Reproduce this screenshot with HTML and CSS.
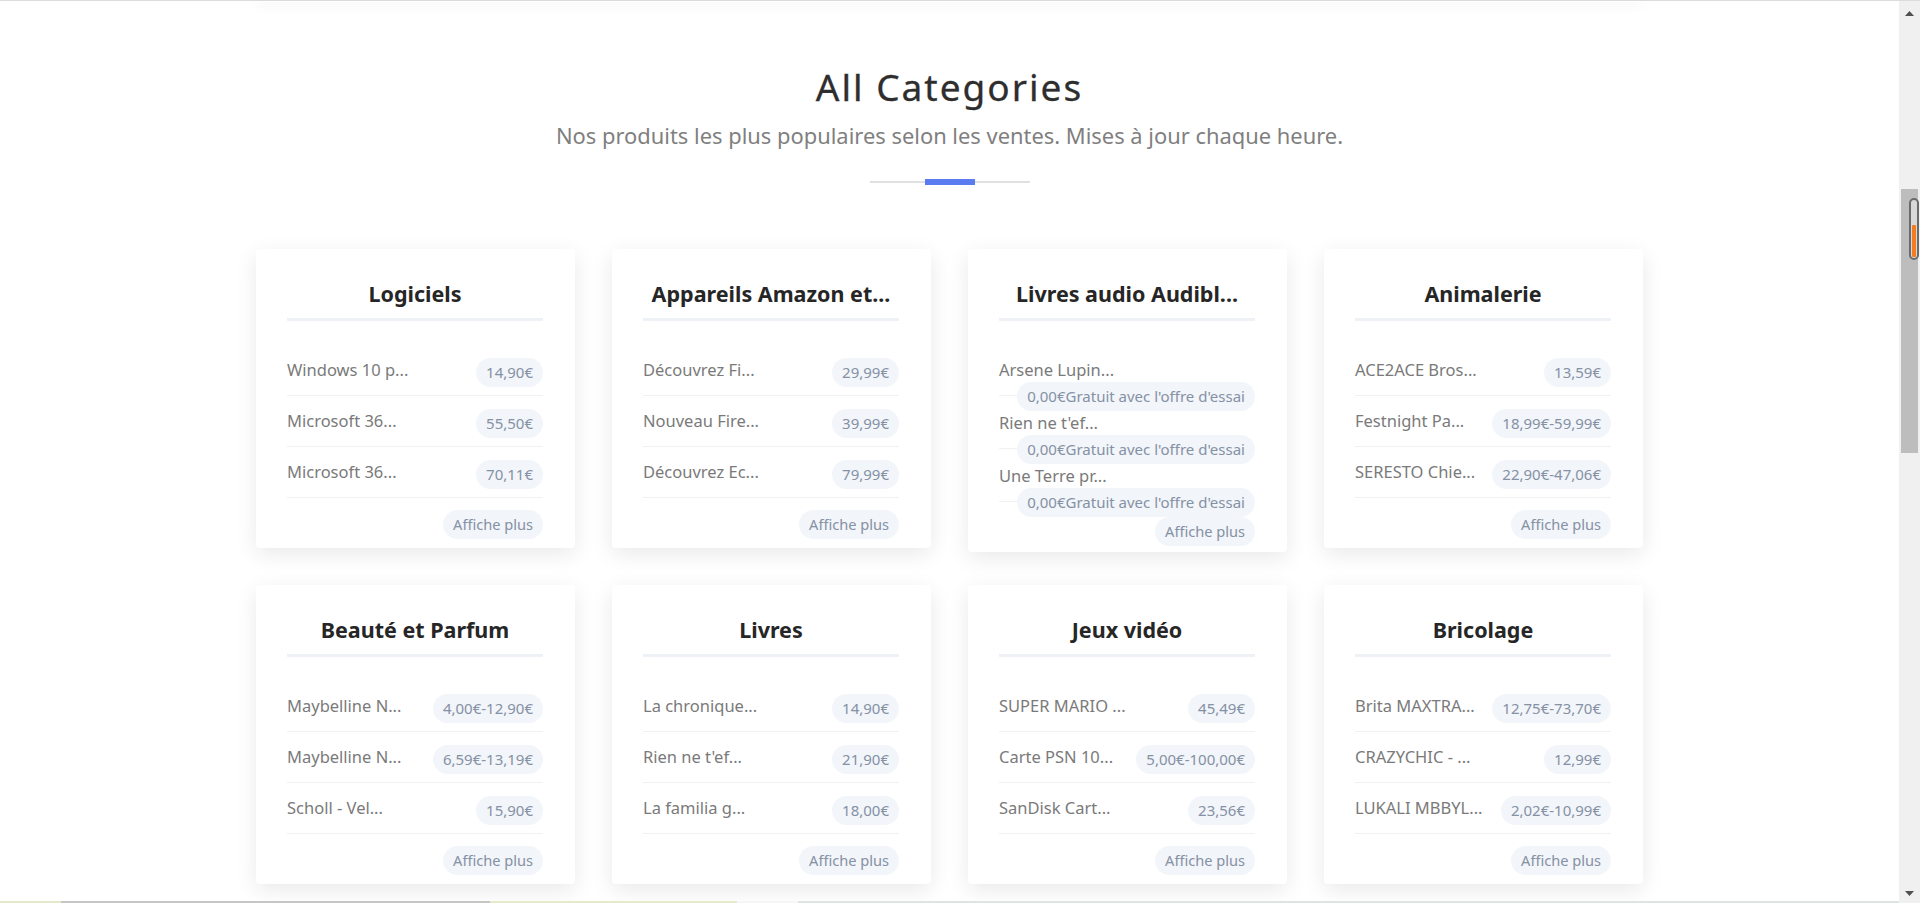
FILE: index.html
```html
<!DOCTYPE html>
<html lang="fr">
<head>
<meta charset="utf-8">
<title>All Categories</title>
<link rel="stylesheet" href="styles.css">
</head>
<body>
<div class="topline"></div>
<div class="window">
  <div class="page">
    <div class="header-edge"></div>
    <section class="categories">
      <h1 class="sec-title">All Categories</h1>
      <p class="sec-sub">Nos produits les plus populaires selon les ventes. Mises à jour chaque heure.</p>
      <div class="divider"><span class="divider-bar"></span></div>

      <div class="grid">
        <div class="card">
          <h3 class="card-title">Logiciels</h3>
          <ul class="items">
            <li class="item"><span class="name">Windows 10 p...</span><span class="price">14,90€</span></li>
            <li class="item"><span class="name">Microsoft 36...</span><span class="price">55,50€</span></li>
            <li class="item"><span class="name">Microsoft 36...</span><span class="price">70,11€</span></li>
          </ul>
          <div class="card-foot"><a class="more">Affiche plus</a></div>
        </div>

        <div class="card">
          <h3 class="card-title">Appareils Amazon et...</h3>
          <ul class="items">
            <li class="item"><span class="name">Découvrez Fi...</span><span class="price">29,99€</span></li>
            <li class="item"><span class="name">Nouveau Fire...</span><span class="price">39,99€</span></li>
            <li class="item"><span class="name">Découvrez Ec...</span><span class="price">79,99€</span></li>
          </ul>
          <div class="card-foot"><a class="more">Affiche plus</a></div>
        </div>

        <div class="card">
          <h3 class="card-title">Livres audio Audibl...</h3>
          <ul class="items">
            <li class="item"><span class="name">Arsene Lupin...</span><span class="price">0,00€Gratuit avec l'offre d'essai</span></li>
            <li class="item"><span class="name">Rien ne t'ef...</span><span class="price">0,00€Gratuit avec l'offre d'essai</span></li>
            <li class="item"><span class="name">Une Terre pr...</span><span class="price">0,00€Gratuit avec l'offre d'essai</span></li>
          </ul>
          <div class="card-foot"><a class="more">Affiche plus</a></div>
        </div>

        <div class="card">
          <h3 class="card-title">Animalerie</h3>
          <ul class="items">
            <li class="item"><span class="name">ACE2ACE Bros...</span><span class="price">13,59€</span></li>
            <li class="item"><span class="name">Festnight Pa...</span><span class="price">18,99€-59,99€</span></li>
            <li class="item"><span class="name">SERESTO Chie...</span><span class="price">22,90€-47,06€</span></li>
          </ul>
          <div class="card-foot"><a class="more">Affiche plus</a></div>
        </div>

        <div class="card">
          <h3 class="card-title">Beauté et Parfum</h3>
          <ul class="items">
            <li class="item"><span class="name">Maybelline N...</span><span class="price">4,00€-12,90€</span></li>
            <li class="item"><span class="name">Maybelline N...</span><span class="price">6,59€-13,19€</span></li>
            <li class="item"><span class="name">Scholl - Vel...</span><span class="price">15,90€</span></li>
          </ul>
          <div class="card-foot"><a class="more">Affiche plus</a></div>
        </div>

        <div class="card">
          <h3 class="card-title">Livres</h3>
          <ul class="items">
            <li class="item"><span class="name">La chronique...</span><span class="price">14,90€</span></li>
            <li class="item"><span class="name">Rien ne t'ef...</span><span class="price">21,90€</span></li>
            <li class="item"><span class="name">La familia g...</span><span class="price">18,00€</span></li>
          </ul>
          <div class="card-foot"><a class="more">Affiche plus</a></div>
        </div>

        <div class="card">
          <h3 class="card-title">Jeux vidéo</h3>
          <ul class="items">
            <li class="item"><span class="name">SUPER MARIO ...</span><span class="price">45,49€</span></li>
            <li class="item"><span class="name">Carte PSN 10...</span><span class="price">5,00€-100,00€</span></li>
            <li class="item"><span class="name">SanDisk Cart...</span><span class="price">23,56€</span></li>
          </ul>
          <div class="card-foot"><a class="more">Affiche plus</a></div>
        </div>

        <div class="card">
          <h3 class="card-title">Bricolage</h3>
          <ul class="items">
            <li class="item"><span class="name">Brita MAXTRA...</span><span class="price">12,75€-73,70€</span></li>
            <li class="item"><span class="name">CRAZYCHIC - ...</span><span class="price">12,99€</span></li>
            <li class="item"><span class="name">LUKALI MBBYL...</span><span class="price">2,02€-10,99€</span></li>
          </ul>
          <div class="card-foot"><a class="more">Affiche plus</a></div>
        </div>
      </div>
    </section>
    <div class="next-strip">
      <span class="seg seg-a"></span><span class="seg seg-b"></span><span class="seg seg-c"></span><span class="seg seg-d"></span><span class="seg seg-e"></span>
    </div>
  </div>

  <aside class="scrollbar">
    <div class="sb-btn sb-up"><svg width="9" height="5" viewBox="0 0 9 5"><path d="M0 5 L4.5 0 L9 5 Z" fill="#505050"/></svg></div>
    <div class="sb-thumb">
      <div class="sb-widget"><span class="sb-widget-bar"></span></div>
    </div>
    <div class="sb-space"></div>
    <div class="sb-btn sb-down"><svg width="9" height="5" viewBox="0 0 9 5"><path d="M0 0 L9 0 L4.5 5 Z" fill="#505050"/></svg></div>
  </aside>
</div>
</body>
</html>
```
FILE: styles.css
```css
* { box-sizing: border-box; }

html, body {
  margin: 0;
  height: 903px;
  overflow: hidden;
}

body {
  display: flex;
  flex-direction: column;
  background: #fff;
  font-family: "Noto Sans", "Open Sans", sans-serif;
  color: #333;
}

.topline {
  flex: none;
  height: 1px;
  background: #dcdcdc;
}

.window {
  flex: 1;
  min-height: 0;
  display: flex;
}

.page {
  flex: 1;
  min-width: 0;
  display: flex;
  flex-direction: column;
}

.header-edge {
  flex: none;
  width: 1387px;
  height: 1px;
  margin: 0 auto;
  background: #fff;
  box-shadow: 0 3px 10px rgba(0, 0, 0, 0.2);
}

.categories {
  flex: 1;
  min-height: 0;
  padding-top: 63px;
}

.sec-title {
  margin: 0;
  text-align: center;
  font-size: 37px;
  line-height: 44px;
  font-weight: 400;
  letter-spacing: 2px;
  color: #2e2e2e;
  -webkit-text-stroke: 0.3px #2e2e2e;
}

.sec-sub {
  margin: 12px 0 0;
  text-align: center;
  font-size: 21.9px;
  line-height: 30px;
  color: #7f7f7f;
}

.divider {
  width: 160px;
  height: 6px;
  margin: 28px auto 0;
  display: flex;
  justify-content: center;
  background: linear-gradient(#e0e0e0, #e0e0e0) center / 100% 2px no-repeat;
}

.divider-bar {
  width: 50px;
  height: 6px;
  background: #5a7cf0;
}

.grid {
  margin-top: 64px;
  display: grid;
  grid-template-columns: repeat(4, 319px);
  column-gap: 37px;
  row-gap: 33px;
  justify-content: center;
  align-items: start;
}

.card {
  background: #fff;
  border-radius: 4px;
  box-shadow: 0 6px 22px rgba(0, 0, 0, 0.09);
  padding: 30px 32px 0 31px;
}

.card-title {
  margin: 0;
  padding-bottom: 9px;
  border-bottom: 3px solid #eef2f6;
  text-align: center;
  font-size: 21.5px;
  line-height: 30px;
  font-weight: 700;
  color: #262626;
  white-space: nowrap;
  overflow: hidden;
}

.items {
  list-style: none;
  margin: 24px 0 0;
  padding: 0;
}

.item {
  padding: 13px 0;
  font-size: 16.5px;
  line-height: 24px;
  color: #7a7a7a;
  border-bottom: 1px solid #f1f1f1;
}

.name {
  white-space: nowrap;
}

.price {
  float: right;
  height: 29px;
  padding: 0 10px;
  border-radius: 15px;
  background: #f2f5f9;
  color: #8591a5;
  font-size: 15px;
  line-height: 29px;
  white-space: nowrap;
}

.card-foot {
  padding-top: 12px;
  height: 50px;
  text-align: right;
  line-height: 29px;
}

.more {
  display: inline-block;
  vertical-align: top;
  height: 29px;
  padding: 0 10px;
  border-radius: 15px;
  background: #f2f5f9;
  color: #8591a5;
  font-size: 14.6px;
  line-height: 29px;
  cursor: pointer;
}

.next-strip {
  flex: none;
  height: 2px;
  display: flex;
}

.seg { display: block; height: 2px; }
.seg-a { width: 61px; background: #e4e9cc; }
.seg-b { width: 429px; background: #c6c6c6; }
.seg-c { width: 247px; background: #e6eacb; }
.seg-d { width: 61px; background: #f6f6f6; }
.seg-e { flex: 1; background: #dce5df; }

/* window scrollbar */
.scrollbar {
  flex: none;
  width: 21px;
  background: #f0f0f0;
  display: flex;
  flex-direction: column;
  padding: 0 2px;
}

.sb-btn {
  flex: none;
  display: flex;
  align-items: center;
  justify-content: center;
}

.sb-up { height: 24px; }
.sb-down { height: 20px; }

.sb-thumb {
  flex: none;
  position: relative;
  margin-top: 164px;
  height: 264px;
  background: #bdbdbd;
}

.sb-space { flex: 1; }

.sb-widget {
  position: absolute;
  left: 8px;
  top: 9px;
  width: 10px;
  height: 62px;
  border: 2px solid #6b6b6b;
  border-radius: 5px;
  background: #d9d9d9;
  display: flex;
  flex-direction: column;
  justify-content: flex-end;
  padding: 0 1px 1px;
}

.sb-widget-bar {
  display: block;
  height: 32px;
  background: #f47b20;
  border-radius: 1px;
}
```
